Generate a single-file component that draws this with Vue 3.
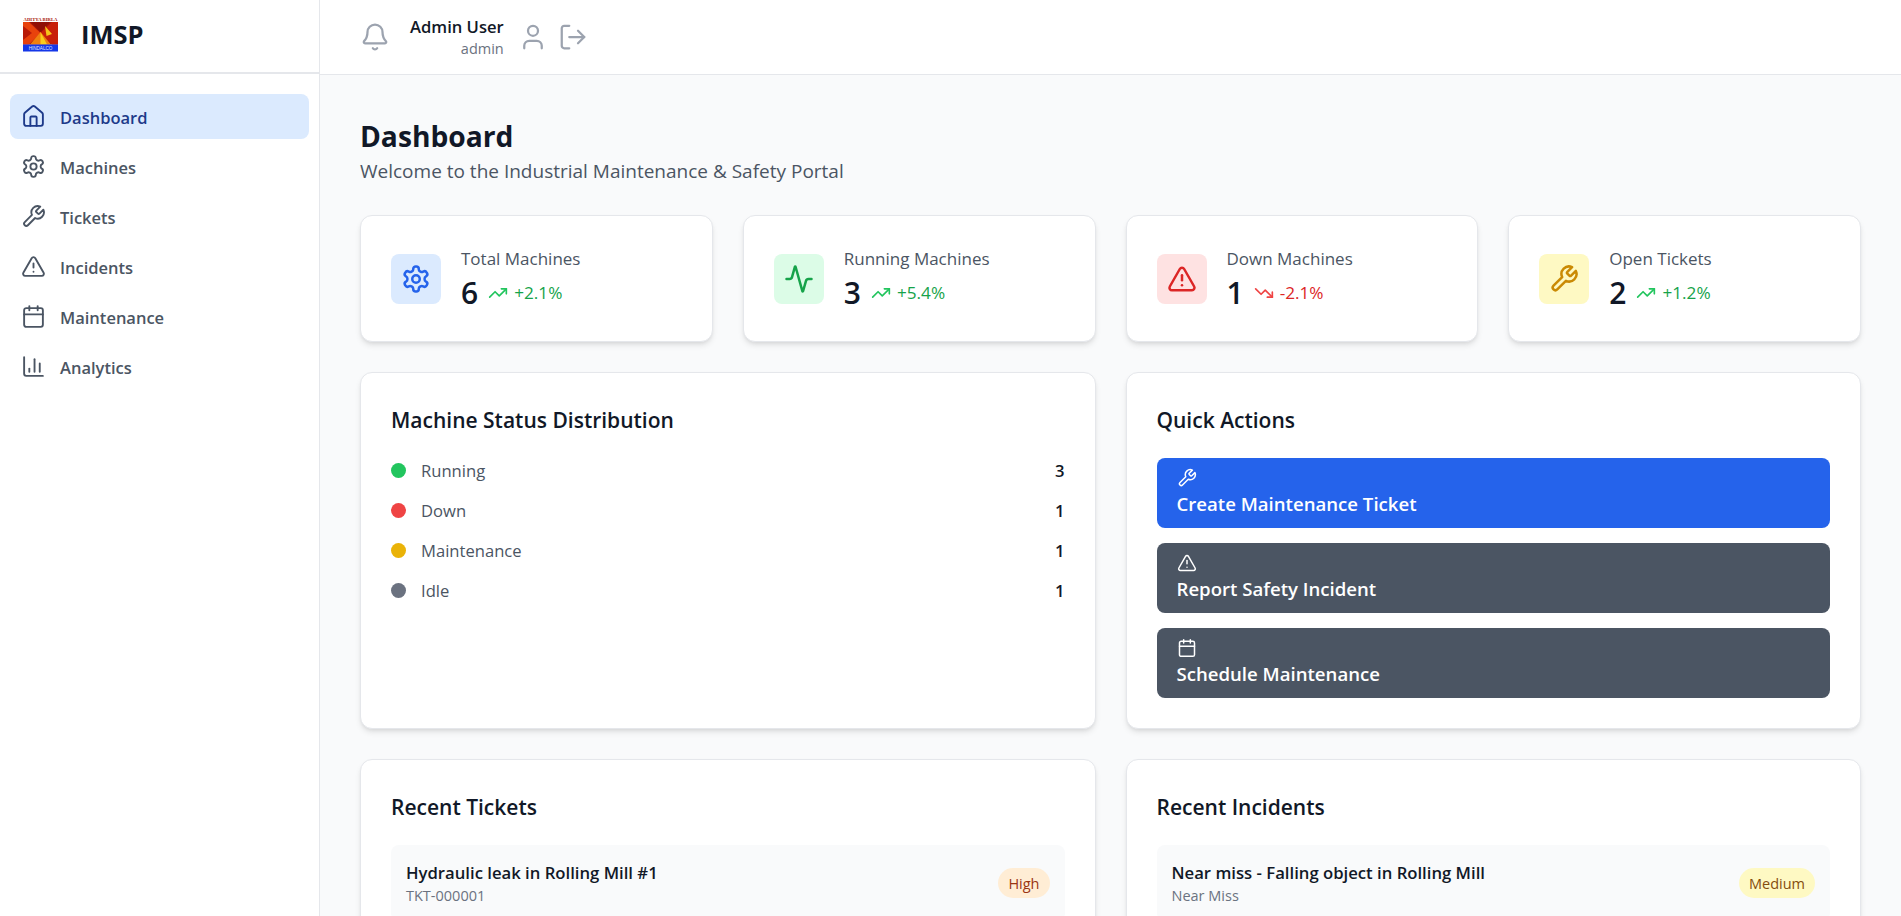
<template>
  <div class="app">
    <aside class="sidebar">
      <div class="brand">
        <svg class="logo" viewBox="0 0 35 35">
          <rect width="35" height="35" fill="#fff" />
          <text x="17.5" y="4.4" text-anchor="middle" textLength="34" lengthAdjust="spacingAndGlyphs" class="logo-top">ADITYA BIRLA</text>
          <rect y="5" width="35" height="22.5" fill="#a51508" />
          <polygon points="0,5 6,5 17.5,16 6,27.5 0,27.5" fill="#e8420c" />
          <polygon points="0,9 9,16 0,23" fill="#b81a08" />
          <polygon points="35,5 29,5 17.5,16 29,27.5 35,27.5" fill="#c81f0a" />
          <polygon points="8,5 27,5 17.5,15" fill="#8f0f06" />
          <polygon points="17.5,15 7,27.5 28,27.5" fill="#f0800f" />
          <polygon points="17.5,15 17.5,27.5 24,27.5" fill="#f9ce1d" />
          <polygon points="22,9 29,17 23.5,19" fill="#f5c41a" />
          <rect y="27.5" width="35" height="7" fill="#1537e8" />
          <text x="17.5" y="32.8" text-anchor="middle" class="logo-bottom">HINDALCO</text>
        </svg>
        <span class="brand-name">IMSP</span>
      </div>
      <nav class="nav">
        <a v-for="item in navItems" :key="item.label" class="nav-item" :class="{ active: item.active }">
          <svg class="nav-icon" viewBox="0 0 24 24" v-html="icons[item.icon]"></svg>
          <span>{{ item.label }}</span>
        </a>
      </nav>
    </aside>

    <div class="main">
      <header class="topbar">
        <svg class="top-icon bell" viewBox="0 0 24 24" v-html="icons.bell"></svg>
        <div class="user">
          <div class="user-name">Admin User</div>
          <div class="user-role">admin</div>
        </div>
        <svg class="top-icon account" viewBox="0 0 24 24" v-html="icons.user"></svg>
        <svg class="top-icon logout" viewBox="0 0 24 24" v-html="icons.logout"></svg>
      </header>

      <main class="content">
        <h1 class="page-title">Dashboard</h1>
        <p class="page-sub">Welcome to the Industrial Maintenance &amp; Safety Portal</p>

        <section class="stats">
          <div v-for="stat in stats" :key="stat.label" class="card stat">
            <div class="stat-icon" :class="stat.tone">
              <svg viewBox="0 0 24 24" v-html="icons[stat.icon]"></svg>
            </div>
            <div>
              <div class="stat-label">{{ stat.label }}</div>
              <div class="stat-line">
                <span class="stat-value">{{ stat.value }}</span>
                <span class="trend" :class="stat.down ? 'down' : 'up'">
                  <svg viewBox="0 0 24 24" v-html="stat.down ? icons.trendDown : icons.trendUp"></svg>
                  {{ stat.trend }}
                </span>
              </div>
            </div>
          </div>
        </section>

        <section class="two-col">
          <div class="card panel">
            <h2 class="panel-title">Machine Status Distribution</h2>
            <div class="status-list">
              <div v-for="row in statuses" :key="row.label" class="status-row">
                <span class="dot" :class="row.tone"></span>
                <span class="status-label">{{ row.label }}</span>
                <span class="status-count">{{ row.count }}</span>
              </div>
            </div>
          </div>
          <div class="card panel">
            <h2 class="panel-title">Quick Actions</h2>
            <div class="actions">
              <button v-for="action in actions" :key="action.label" type="button" class="action" :class="{ primary: action.primary }">
                <svg viewBox="0 0 24 24" v-html="icons[action.icon]"></svg>
                <span>{{ action.label }}</span>
              </button>
            </div>
          </div>
        </section>

        <section class="two-col">
          <div class="card panel">
            <h2 class="panel-title">Recent Tickets</h2>
            <div class="recent">
              <div class="recent-text">
                <div class="recent-title">Hydraulic leak in Rolling Mill #1</div>
                <div class="recent-sub">TKT-000001</div>
              </div>
              <span class="badge high">High</span>
            </div>
          </div>
          <div class="card panel">
            <h2 class="panel-title">Recent Incidents</h2>
            <div class="recent">
              <div class="recent-text">
                <div class="recent-title">Near miss - Falling object in Rolling Mill</div>
                <div class="recent-sub">Near Miss</div>
              </div>
              <span class="badge medium">Medium</span>
            </div>
          </div>
        </section>
      </main>
    </div>
  </div>
</template>

<script setup>
const icons = {
  home: '<path d="M15 21v-8a1 1 0 0 0-1-1h-4a1 1 0 0 0-1 1v8"/><path d="M3 10a2 2 0 0 1 .709-1.528l7-5.999a2 2 0 0 1 2.582 0l7 5.999A2 2 0 0 1 21 10v9a2 2 0 0 1-2 2H5a2 2 0 0 1-2-2z"/>',
  gear: '<path d="M12.22 2h-.44a2 2 0 0 0-2 2v.18a2 2 0 0 1-1 1.73l-.43.25a2 2 0 0 1-2 0l-.15-.08a2 2 0 0 0-2.73.73l-.22.38a2 2 0 0 0 .73 2.73l.15.1a2 2 0 0 1 1 1.72v.51a2 2 0 0 1-1 1.74l-.15.09a2 2 0 0 0-.73 2.73l.22.38a2 2 0 0 0 2.73.73l.15-.08a2 2 0 0 1 2 0l.43.25a2 2 0 0 1 1 1.73V20a2 2 0 0 0 2 2h.44a2 2 0 0 0 2-2v-.18a2 2 0 0 1 1-1.73l.43-.25a2 2 0 0 1 2 0l.15.08a2 2 0 0 0 2.73-.73l.22-.39a2 2 0 0 0-.73-2.73l-.15-.08a2 2 0 0 1-1-1.74v-.5a2 2 0 0 1 1-1.74l.15-.09a2 2 0 0 0 .73-2.73l-.22-.38a2 2 0 0 0-2.73-.73l-.15.08a2 2 0 0 1-2 0l-.43-.25a2 2 0 0 1-1-1.73V4a2 2 0 0 0-2-2z"/><circle cx="12" cy="12" r="3"/>',
  wrench: '<path d="M14.7 6.3a1 1 0 0 0 0 1.4l1.6 1.6a1 1 0 0 0 1.4 0l3.77-3.77a6 6 0 0 1-7.94 7.94l-6.91 6.91a2.12 2.12 0 0 1-3-3l6.91-6.91a6 6 0 0 1 7.94-7.94l-3.76 3.76z"/>',
  alert: '<path d="m21.73 18-8-14a2 2 0 0 0-3.48 0l-8 14A2 2 0 0 0 4 21h16a2 2 0 0 0 1.73-3"/><path d="M12 9v4"/><path d="M12 17h.01"/>',
  calendar: '<path d="M8 2v4"/><path d="M16 2v4"/><rect width="18" height="18" x="3" y="4" rx="2"/><path d="M3 10h18"/>',
  chart: '<path d="M3 3v16a2 2 0 0 0 2 2h16"/><path d="M8 17v-3"/><path d="M13 17V5"/><path d="M18 17V9"/>',
  activity: '<path d="M22 12h-2.48a2 2 0 0 0-1.93 1.46l-2.35 8.36a.25.25 0 0 1-.48 0L9.24 2.18a.25.25 0 0 0-.48 0l-2.35 8.36A2 2 0 0 1 4.49 12H2"/>',
  trendUp: '<path d="M16 7h6v6"/><path d="m22 7-8.5 8.5-5-5L2 17"/>',
  trendDown: '<path d="M16 17h6v-6"/><path d="m22 17-8.5-8.5-5 5L2 7"/>',
  bell: '<path d="M10.268 21a2 2 0 0 0 3.464 0"/><path d="M3.262 15.326A1 1 0 0 0 4 17h16a1 1 0 0 0 .74-1.673C19.41 13.956 18 12.499 18 8A6 6 0 0 0 6 8c0 4.499-1.411 5.956-2.738 7.326"/>',
  user: '<path d="M19 21v-2a4 4 0 0 0-4-4H9a4 4 0 0 0-4 4v2"/><circle cx="12" cy="7" r="4"/>',
  logout: '<path d="m16 17 5-5-5-5"/><path d="M21 12H9"/><path d="M9 21H5a2 2 0 0 1-2-2V5a2 2 0 0 1 2-2h4"/>'
}

const navItems = [
  { label: 'Dashboard', icon: 'home', active: true },
  { label: 'Machines', icon: 'gear' },
  { label: 'Tickets', icon: 'wrench' },
  { label: 'Incidents', icon: 'alert' },
  { label: 'Maintenance', icon: 'calendar' },
  { label: 'Analytics', icon: 'chart' }
]

const stats = [
  { label: 'Total Machines', value: 6, trend: '+2.1%', icon: 'gear', tone: 'blue' },
  { label: 'Running Machines', value: 3, trend: '+5.4%', icon: 'activity', tone: 'green' },
  { label: 'Down Machines', value: 1, trend: '-2.1%', icon: 'alert', tone: 'red', down: true },
  { label: 'Open Tickets', value: 2, trend: '+1.2%', icon: 'wrench', tone: 'yellow' }
]

const statuses = [
  { label: 'Running', count: 3, tone: 'green' },
  { label: 'Down', count: 1, tone: 'red' },
  { label: 'Maintenance', count: 1, tone: 'yellow' },
  { label: 'Idle', count: 1, tone: 'gray' }
]

const actions = [
  { label: 'Create Maintenance Ticket', icon: 'wrench', primary: true },
  { label: 'Report Safety Incident', icon: 'alert' },
  { label: 'Schedule Maintenance', icon: 'calendar' }
]
</script>

<style>
html, body {
  margin: 0;
  height: 100%;
  overflow: hidden;
}
</style>

<style scoped>
.app {
  display: flex;
  height: 916px;
  overflow: hidden;
  background: #f9fafb;
  font-family: "Open Sans", "Noto Sans", sans-serif;
  color: #111827;
}

svg {
  fill: none;
  stroke: currentColor;
  stroke-width: 2;
  stroke-linecap: round;
  stroke-linejoin: round;
  flex: none;
}

.sidebar {
  width: 320px;
  flex: none;
  background: #fff;
  border-right: 1px solid #e5e7eb;
  box-sizing: border-box;
}

.brand {
  height: 74px;
  box-sizing: border-box;
  border-bottom: 2px solid #e5e7eb;
  display: flex;
  align-items: center;
  padding: 0 0 4px 23px;
  gap: 23px;
}

.logo {
  width: 35px;
  height: 35px;
  stroke: none;
}

.logo-top {
  font: 700 4.2px "Liberation Serif", serif;
  fill: #a81608;
}

.logo-bottom {
  font: 400 4.6px "Liberation Sans", sans-serif;
  fill: #dfe6ff;
}

.brand-name {
  font-size: 25.5px;
  font-weight: 700;
  color: #111827;
}

.nav {
  padding: 20px 10px;
  display: flex;
  flex-direction: column;
  gap: 5px;
}

.nav-item {
  height: 45px;
  display: flex;
  align-items: center;
  gap: 14px;
  padding: 0 11px;
  border-radius: 8px;
  font-size: 16.5px;
  font-weight: 600;
  color: #4b5563;
}

.nav-item span {
  padding-top: 1px;
}

.nav-item.active {
  background: #dbeafe;
  color: #1e3a8a;
}

.nav-icon {
  width: 25px;
  height: 25px;
  stroke-width: 1.8;
}

.topbar {
  height: 75px;
  box-sizing: border-box;
  flex: none;
  background: #fff;
  border-bottom: 1px solid #e5e7eb;
  display: flex;
  align-items: center;
  padding: 0 0 0 40px;
  gap: 15px;
}

.top-icon {
  width: 30px;
  height: 30px;
  color: #9ca3af;
  stroke-width: 1.8;
}

.bell {
  margin-right: 5px;
}

.account {
  margin-left: -1px;
}

.logout {
  margin-left: -5px;
}

.user {
  text-align: right;
}

.user-name {
  font-size: 16.6px;
  font-weight: 600;
  color: #111827;
  line-height: 23px;
}

.user-role {
  font-size: 14.5px;
  color: #6b7280;
  line-height: 21px;
}

.main {
  flex: 1;
  min-width: 0;
  display: flex;
  flex-direction: column;
}

.content {
  padding: 41px 40px 0;
  overflow: hidden;
}

.page-title {
  margin: 0;
  font-size: 28.2px;
  font-weight: 700;
  line-height: 40px;
  color: #111827;
}

.page-sub {
  margin: 1px 0 0;
  font-size: 19px;
  line-height: 28px;
  color: #4b5563;
}

.stats {
  display: grid;
  grid-template-columns: repeat(4, 1fr);
  gap: 30px;
  margin-top: 30px;
}

.card {
  background: #fff;
  border: 1px solid #e5e7eb;
  border-radius: 12px;
  box-shadow: 0 4px 6px -1px rgba(0, 0, 0, 0.1), 0 2px 4px -2px rgba(0, 0, 0, 0.1);
  box-sizing: border-box;
}

.stat {
  height: 127px;
  display: flex;
  align-items: center;
  gap: 20px;
  padding: 0 30px;
}

.stat-icon {
  width: 50px;
  height: 50px;
  border-radius: 8px;
  display: flex;
  align-items: center;
  justify-content: center;
}

.stat-icon svg {
  width: 30px;
  height: 30px;
}

.stat-icon.blue { background: #dbeafe; color: #2563eb; }
.stat-icon.green { background: #dcfce7; color: #16a34a; }
.stat-icon.red { background: #fee2e2; color: #dc2626; }
.stat-icon.yellow { background: #fef9c3; color: #ca8a04; }

.stat-label {
  font-size: 17px;
  font-weight: 500;
  line-height: 24px;
  color: #4b5563;
}

.stat-line {
  display: flex;
  align-items: center;
  gap: 10px;
  margin-top: 4px;
}

.stat-value {
  font-size: 30px;
  font-weight: 600;
  line-height: 36px;
  color: #111827;
}

.trend {
  display: flex;
  align-items: center;
  gap: 6px;
  font-size: 17.2px;
}

.trend svg {
  width: 20px;
  height: 20px;
}

.trend.up { color: #16a34a; }
.trend.up svg { color: #22c55e; }
.trend.down { color: #dc2626; }
.trend.down svg { color: #ef4444; }

.two-col {
  display: grid;
  grid-template-columns: 1fr 1fr;
  gap: 30px;
  margin-top: 30px;
}

.panel {
  padding: 30px;
}

.panel-title {
  margin: 0 0 20px;
  font-size: 21px;
  font-weight: 600;
  line-height: 35px;
  color: #111827;
}

.status-list {
  display: flex;
  flex-direction: column;
  gap: 16px;
  height: 206px;
}

.status-row {
  display: flex;
  align-items: center;
  height: 24px;
  font-size: 16.6px;
}

.dot {
  width: 15px;
  height: 15px;
  border-radius: 50%;
  margin-right: 15px;
}

.dot.green { background: #22c55e; }
.dot.red { background: #ef4444; }
.dot.yellow { background: #eab308; }
.dot.gray { background: #6b7280; }

.status-label {
  flex: 1;
  color: #4b5563;
}

.status-count {
  font-weight: 600;
  color: #111827;
}

.actions {
  display: flex;
  flex-direction: column;
  gap: 15px;
}

.action {
  height: 70px;
  border: 0;
  border-radius: 8px;
  background: #4b5563;
  color: #fff;
  font-family: inherit;
  font-size: 18.6px;
  font-weight: 600;
  text-align: left;
  padding: 10px 20px;
  display: flex;
  flex-direction: column;
  align-items: flex-start;
  gap: 3px;
}

.action.primary {
  background: #2563eb;
}

.action svg {
  width: 20px;
  height: 20px;
  stroke-width: 1.8;
}

.recent {
  display: flex;
  align-items: center;
  justify-content: space-between;
  background: #f9fafb;
  border-radius: 8px;
  padding: 15px;
}

.recent-title {
  font-size: 16.7px;
  font-weight: 600;
  line-height: 26px;
  color: #111827;
}

.recent-sub {
  font-size: 14.5px;
  line-height: 20px;
  color: #6b7280;
}

.badge {
  height: 30px;
  display: flex;
  align-items: center;
  padding: 0 10px;
  border-radius: 15px;
  font-size: 14.5px;
}

.badge.high { background: #ffedd5; color: #9a3412; }
.badge.medium { background: #fef9c3; color: #854d0e; }
</style>
